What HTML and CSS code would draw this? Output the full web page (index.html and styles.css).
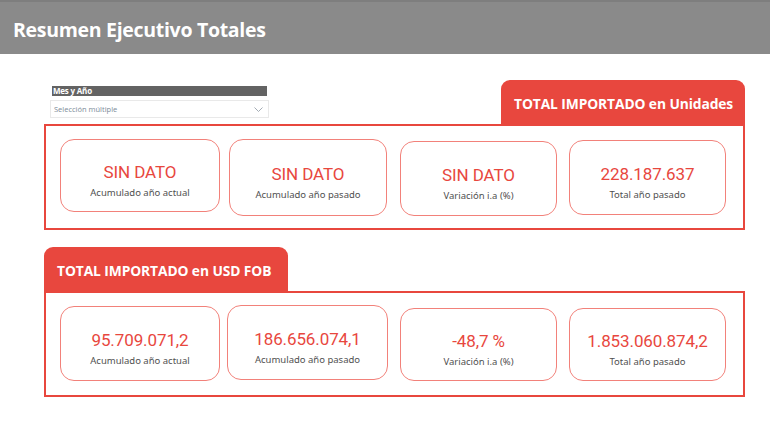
FILE: index.html
```html
<!DOCTYPE html>
<html lang="es">
<head>
<meta charset="utf-8">
<title>Resumen Ejecutivo Totales</title>
<link rel="stylesheet" href="styles.css">
</head>
<body>
<header class="topbar">
  <h1 class="topbar-title">Resumen Ejecutivo Totales</h1>
</header>
<main class="page">
  <section class="panel">
    <div class="panel-head">
      <div class="slicer">
        <div class="slicer-title">Mes y Año</div>
        <div class="slicer-box">
          <span class="slicer-value">Selección múltiple</span>
          <svg class="slicer-chevron" width="9" height="5" viewBox="0 0 9 5"><path d="M0.5 0.5 L4.5 4.5 L8.5 0.5" fill="none" stroke="#9aa3ad" stroke-width="0.9"/></svg>
        </div>
      </div>
      <div class="tab tab--right">TOTAL IMPORTADO en Unidades</div>
    </div>
    <div class="panel-box">
      <div class="card c1 r1a"><div class="card-value">SIN DATO</div><div class="card-label">Acumulado año actual</div></div>
      <div class="card c2 r1b"><div class="card-value">SIN DATO</div><div class="card-label">Acumulado año pasado</div></div>
      <div class="card c3 r1c"><div class="card-value">SIN DATO</div><div class="card-label">Variación i.a (%)</div></div>
      <div class="card c4 r1d"><div class="card-value">228.187.637</div><div class="card-label">Total año pasado</div></div>
    </div>
  </section>
  <section class="panel panel--second">
    <div class="panel-head">
      <div class="tab">TOTAL IMPORTADO en USD FOB</div>
    </div>
    <div class="panel-box">
      <div class="card c1 r2a"><div class="card-value">95.709.071,2</div><div class="card-label">Acumulado año actual</div></div>
      <div class="card c2 r2b"><div class="card-value">186.656.074,1</div><div class="card-label">Acumulado año pasado</div></div>
      <div class="card c3 r2c"><div class="card-value">-48,7 %</div><div class="card-label">Variación i.a (%)</div></div>
      <div class="card c4 r2d"><div class="card-value">1.853.060.874,2</div><div class="card-label">Total año pasado</div></div>
    </div>
  </section>
</main>
</body>
</html>
```
FILE: styles.css
```css
* { box-sizing: border-box; }
html, body { margin: 0; padding: 0; background: #ffffff; }
body { font-family: "Open Sans", "Noto Sans", sans-serif; width: 770px; height: 443px; overflow: hidden; }

.topbar {
  height: 54px;
  background: #8a8a8a;
  border-top: 2px solid #7e7e7e;
  display: flex;
  align-items: center;
  padding: 2px 0 0 13px;
}
.topbar-title {
  margin: 0;
  color: #ffffff;
  font-size: 19.5px;
  font-weight: 700;
  letter-spacing: -0.3px;
}

.page {
  padding: 26px 0 0 44px;
  width: 745px;
}

.panel-head {
  display: flex;
  height: 44px;
  align-items: flex-start;
}
.panel--second { margin-top: 17px; }

.slicer { margin: 6px 0 0 6px; width: 219px; }
.slicer-title {
  margin-left: 2px;
  width: 215px;
  height: 10px;
  background: #636363;
  color: #ffffff;
  font-size: 8px;
  font-weight: 700;
  line-height: 10px;
  padding-left: 1px;
  letter-spacing: -0.2px;
}
.slicer-box {
  margin-top: 4px;
  height: 18px;
  border: 1px solid #e9e9e9;
  display: flex;
  align-items: center;
  justify-content: space-between;
  padding: 0 5px 0 3px;
}
.slicer-value { font-size: 7.5px; color: #7d8c99; }
.slicer-chevron { display: block; }

.tab {
  width: 244px;
  height: 44px;
  background: #e8473e;
  border-radius: 9px 9px 0 0;
  color: #ffffff;
  font-size: 13.8px;
  font-weight: 700;
  display: flex;
  align-items: center;
  padding: 2px 0 0 13px;
  white-space: nowrap;
  letter-spacing: -0.1px;
}
.tab--right { margin-left: auto; }

.panel-box {
  height: 106px;
  border: 2px solid #e8473e;
  display: flex;
  align-items: flex-start;
  padding-left: 14px;
}

.card {
  border: 1px solid #f2817a;
  border-radius: 14px;
  display: flex;
  flex-direction: column;
  align-items: center;
  justify-content: center;
  padding-top: 9px;
}
.c1 { width: 160px; }
.c2 { width: 158px; margin-left: 9px; }
.c3 { width: 157px; margin-left: 13px; }
.c4 { width: 157px; margin-left: 12px; }

.r1a { margin-top: 13px; height: 73px; }
.r1b { margin-top: 13px; height: 77px; }
.r1c { margin-top: 15px; height: 75px; }
.r1d { margin-top: 14px; height: 75px; }
.r2a { margin-top: 13px; height: 75px; }
.r2b { margin-top: 12px; height: 75px; margin-left: 7px; width: 161px; }
.r2c { margin-top: 15px; height: 73px; margin-left: 12px; }
.r2d { margin-top: 15px; height: 73px; }

.card-value {
  font-family: "Roboto", "DejaVu Sans Condensed", sans-serif;
  font-size: 17px;
  color: #e8473e;
  line-height: 22px;
  letter-spacing: -0.1px;
}
.card-label {
  font-family: "Noto Sans", "Open Sans", sans-serif;
  font-size: 9.5px;
  color: #505050;
  line-height: 12px;
  margin-top: 4px;
}
```
